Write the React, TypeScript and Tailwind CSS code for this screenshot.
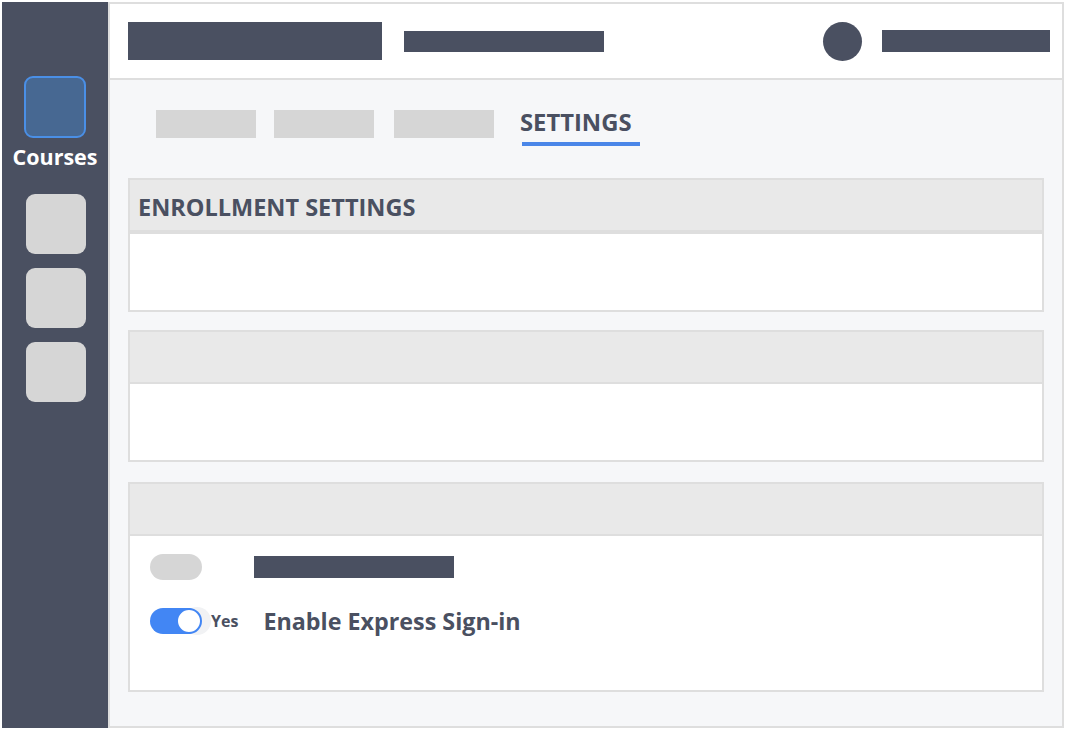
import React from "react";

const font = { fontFamily: '"Open Sans", "Noto Sans", sans-serif' };

export default function App() {
  return (
    <div className="w-[1066px] h-[730px] bg-white p-[2px] flex" style={font}>
      {/* Sidebar */}
      <div className="w-[106px] h-[726px] bg-[#4a5061] flex flex-col items-center pt-[74px]">
        <div className="w-[62px] h-[62px] rounded-[9px] border-2 border-[#4a8fe6] bg-[#476892]" />
        <div className="mt-[5px] text-white text-[21.5px] font-bold leading-[28px]">Courses</div>
        <div className="mt-[23px] ml-[2px] w-[60px] h-[60px] rounded-[9px] bg-[#d6d6d6]" />
        <div className="mt-[14px] ml-[2px] w-[60px] h-[60px] rounded-[9px] bg-[#d6d6d6]" />
        <div className="mt-[14px] ml-[2px] w-[60px] h-[60px] rounded-[9px] bg-[#d6d6d6]" />
      </div>

      {/* Main */}
      <div className="w-[956px] h-[726px] border-2 border-[#dedede] bg-[#f6f7f9] flex flex-col">
        {/* Header */}
        <div className="h-[76px] bg-white border-b-2 border-[#dedede] flex items-center pl-[18px] pr-[12px]">
          <div className="w-[254px] h-[38px] bg-[#4a5061]" />
          <div className="ml-[22px] w-[200px] h-[21px] bg-[#4a5061]" />
          <div className="flex-1" />
          <div className="w-[39px] h-[39px] rounded-full bg-[#4a5061]" />
          <div className="ml-[20px] w-[168px] h-[22px] bg-[#4a5061]" />
        </div>

        {/* Tabs */}
        <div className="h-[98px] flex items-start pl-[46px] pt-[30px]">
          <div className="w-[100px] h-[28px] bg-[#d6d6d6]" />
          <div className="ml-[18px] w-[100px] h-[28px] bg-[#d6d6d6]" />
          <div className="ml-[20px] w-[100px] h-[28px] bg-[#d6d6d6]" />
          <div className="ml-[26px] flex flex-col -mt-[3px]">
            <div className="text-[23.8px] font-bold leading-[30px] text-[#4a5061]">SETTINGS</div>
            <div className="mt-[5px] ml-[2px] w-[118px] h-[4px] bg-[#4a86e8]" />
          </div>
        </div>

        {/* Card 1 */}
        <div className="mx-[18px] border-2 border-[#dedede] bg-white flex flex-col">
          <div className="h-[54px] bg-[#e9e9e9] border-b-4 border-[#dedede] flex items-center pl-[8px] pt-[3px]">
            <span className="text-[23.5px] font-bold text-[#4a5061] leading-[30px]">ENROLLMENT SETTINGS</span>
          </div>
          <div className="h-[76px]" />
        </div>

        {/* Card 2 */}
        <div className="mt-[18px] mx-[18px] border-2 border-[#dedede] bg-white flex flex-col">
          <div className="h-[52px] bg-[#e9e9e9] border-b-2 border-[#dedede]" />
          <div className="h-[76px]" />
        </div>

        {/* Card 3 */}
        <div className="mt-[20px] mx-[18px] border-2 border-[#dedede] bg-white flex flex-col">
          <div className="h-[52px] bg-[#e9e9e9] border-b-2 border-[#dedede]" />
          <div className="h-[154px] pl-[20px] pt-[18px] flex flex-col">
            <div className="flex items-center h-[26px]">
              <div className="w-[52px] h-[26px] rounded-full bg-[#d6d6d6]" />
              <div className="ml-[52px] w-[200px] h-[22px] bg-[#4a5061]" />
            </div>
            <div className="mt-[28px] flex items-center h-[26px]">
              <div className="relative w-[52px] h-[26px] rounded-full bg-[#4286f4]">
                <div className="absolute right-[-9px] top-[-1px] w-[28px] h-[28px] rounded-full bg-[#f1f2f4]" />
                <div className="absolute right-0 top-0 w-[26px] h-[26px] rounded-full bg-white border-2 border-[#4286f4]" />
              </div>
              <span className="relative ml-[9px] text-[16px] font-bold text-[#4a5061] leading-[20px]">Yes</span>
              <span className="ml-[25px] text-[23.3px] font-bold text-[#4a5061] leading-[30px]">Enable Express Sign-in</span>
            </div>
          </div>
        </div>
      </div>
    </div>
  );
}
